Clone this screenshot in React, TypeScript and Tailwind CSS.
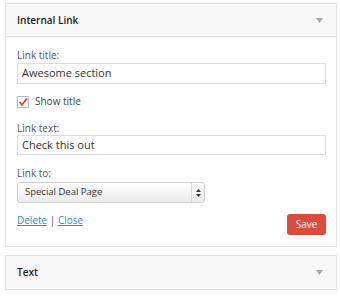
import React from "react";

function Arrow() {
  return (
    <svg width="7" height="5" viewBox="0 0 7 5" className="shrink-0">
      <path d="M0 0 L7 0 L3.5 5 Z" fill="#a8a8a8" />
    </svg>
  );
}

export default function App() {
  return (
    <div
      className="w-[340px] h-[296px] bg-white pt-[3px] pl-[5px]"
      style={{ fontFamily: '"Open Sans", "Noto Sans", sans-serif' }}
    >
      <div className="w-[332px] border border-[#e2e2e2] bg-white">
        <div className="h-[33px] bg-[#f8f8f8] border-b border-[#e2e2e2] flex items-center justify-between pl-[11px] pr-[13px]">
          <span className="text-[10px] font-semibold text-[#222]">Internal Link</span>
          <Arrow />
        </div>
        <div className="pl-[11px] pr-[10px] pt-[11px] pb-[11px] text-[#555]">
          <div className="text-[10px] leading-[14px]">Link title:</div>
          <div className="mt-[1px] h-[21px] border border-[#dcdcdc] flex items-center pl-[4px] text-[11px] text-[#333]">
            Awesome section
          </div>
          <label className="mt-[11px] flex items-center gap-[6px] h-[13px]">
            <span className="w-[12px] h-[12px] border border-[#bbb] bg-white flex items-center justify-center">
              <svg width="10" height="10" viewBox="0 0 10 10">
                <path d="M1.5 5 L4 8 L8.8 1.5" stroke="#d0342c" strokeWidth="1.6" fill="none" />
              </svg>
            </span>
            <span className="text-[10px] text-[#444]">Show title</span>
          </label>
          <div className="mt-[13px] text-[10px] leading-[14px]">Link text:</div>
          <div className="h-[20px] border border-[#dcdcdc] flex items-center pl-[4px] text-[11px] text-[#333]">
            Check this out
          </div>
          <div className="mt-[11px] text-[10px] leading-[14px]">Link to:</div>
          <div className="mt-[2px] w-[188px] h-[21px] border border-[#cfcfcf] rounded-[3px] bg-gradient-to-b from-[#fdfdfd] to-[#ececec] flex items-center text-[9.5px] text-[#333]">
            <span className="flex-1 pl-[7px]">Special Deal Page</span>
            <span className="w-[13px] h-full border-l border-[#d8d8d8] flex items-center justify-center">
              <svg width="5" height="8" viewBox="0 0 5 8">
                <path d="M0 3 L2.5 0 L5 3 Z M0 5 L2.5 8 L5 5 Z" fill="#333" />
              </svg>
            </span>
          </div>
          <div className="mt-[8px] flex items-start justify-between">
            <div className="text-[10px] leading-[18px] text-[#2e8ec4]">
              <span className="underline">Delete</span>
              <span className="text-[#555]"> | </span>
              <span className="underline">Close</span>
            </div>
            <button className="mt-[3px] h-[21px] w-[39px] rounded-[3px] bg-[#de4a3c] text-white text-[10px] flex items-center justify-center">
              Save
            </button>
          </div>
        </div>
      </div>
      <div className="mt-[8px] w-[332px] h-[35px] border border-[#e2e2e2] bg-[#f8f8f8] flex items-center justify-between pl-[11px] pr-[13px]">
        <span className="text-[10px] font-semibold text-[#222]">Text</span>
        <Arrow />
      </div>
    </div>
  );
}
